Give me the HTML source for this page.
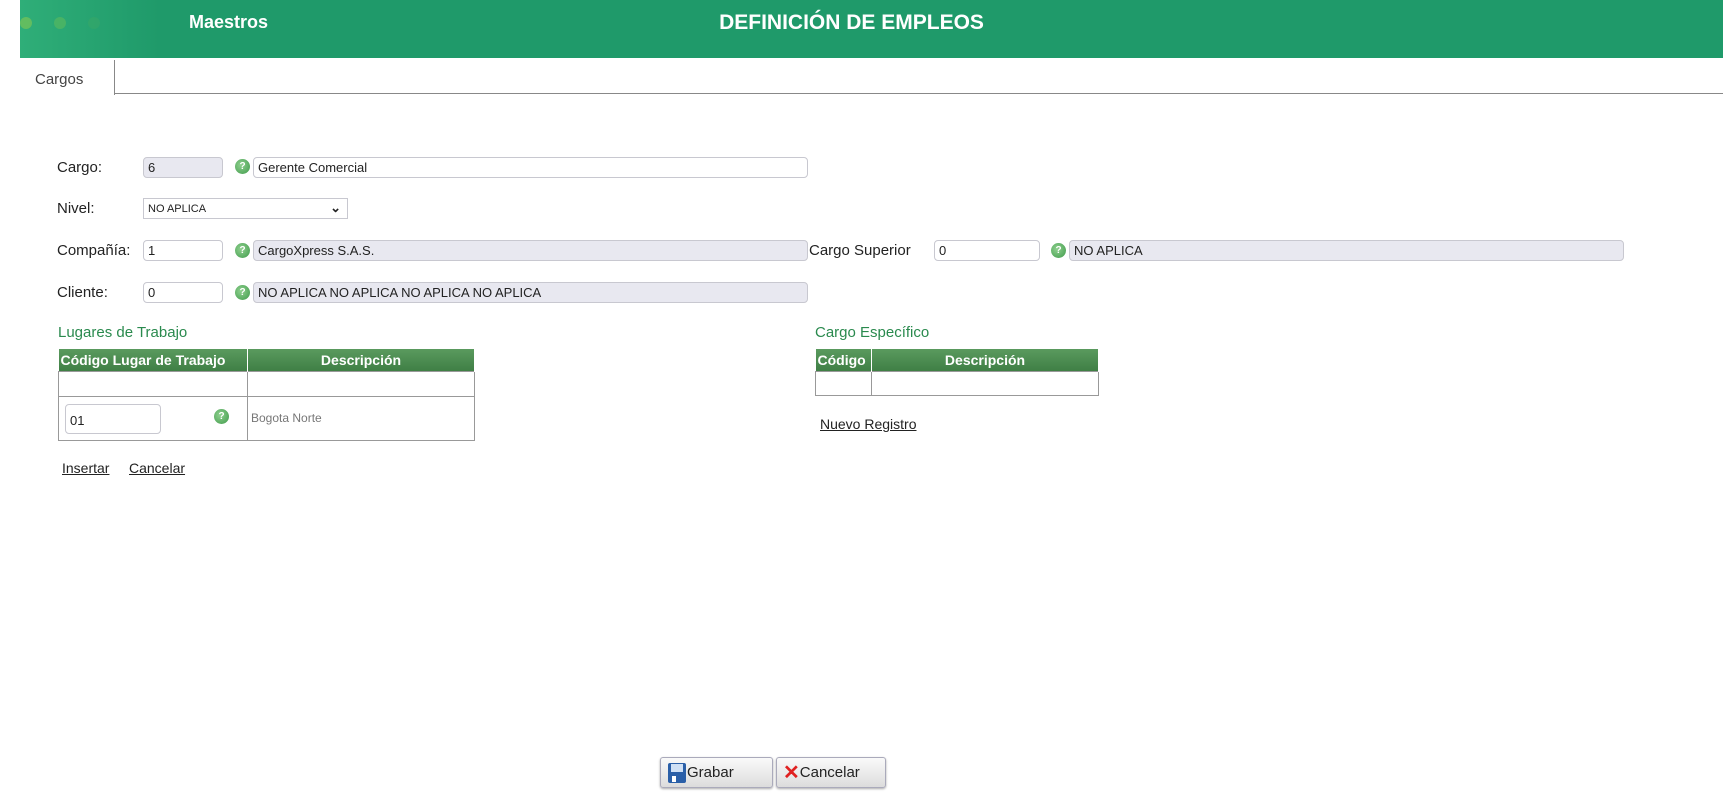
<!DOCTYPE html>
<html><head><meta charset="utf-8"><style>
*{box-sizing:border-box;margin:0;padding:0}
body{width:1723px;height:799px;background:#fff;font-family:"Liberation Sans",sans-serif;position:relative;overflow:hidden;color:#222}
.abs{position:absolute}
.hdr{left:20px;top:0;width:1703px;height:58px;background:linear-gradient(90deg,#2fae78 0,#1f9a6a 140px,#1f9a6a 100%)}
.dot{width:12px;height:12px;border-radius:50%;top:17px}
.lbl{font-size:15px;color:#222}
.inp{height:21px;border:1px solid #c8c8d0;border-radius:4px;background:#fff;font-size:13px;padding:2px 4px;line-height:15px}
.ro{background:#e8e8f0}
.ic{width:15px;height:15px;border-radius:50%;background:radial-gradient(circle at 40% 40%,#8fd08f,#3f9a4a);color:#fff;font-size:10px;font-weight:bold;text-align:center;line-height:15px}
.grn{color:#2a8a4e;font-size:15px}
table{border-collapse:collapse;position:absolute;font-size:14px}
th{background:linear-gradient(#5a9a5e,#3f7f45);color:#fff;font-weight:bold;height:22px;border-right:1px solid #fff;text-align:center;padding:0 2px}
td{border:1px solid #999}
a{color:#222;text-decoration:underline;font-size:14px;position:absolute}
.btn{height:31px;border:1px solid #aab;border-radius:3px;background:linear-gradient(#fafafa,#dcdcdc);font-size:15px;display:flex;align-items:center;padding-left:6px;box-shadow:0 1px 2px #aaa}
</style></head><body>
<div class="abs hdr"></div>
<div class="abs dot" style="left:20px;background:#6fc05a;opacity:.8"></div>
<div class="abs dot" style="left:54px;background:#55b860;opacity:.7"></div>
<div class="abs dot" style="left:88px;background:#3aa866;opacity:.5"></div>
<div class="abs" style="left:189px;top:12px;color:#fff;font-weight:bold;font-size:18px">Maestros</div>
<div class="abs" style="left:0;width:1703px;top:11px;text-align:center;color:#fff;font-weight:bold;font-size:21px">DEFINICIÓN DE EMPLEOS</div>
<div class="abs" style="left:114px;top:93px;width:1609px;height:1px;background:#888"></div>
<div class="abs" style="left:20px;top:60px;width:95px;height:35px;border-right:1px solid #888;background:#fff;font-size:15px;color:#444;padding:11px 0 0 15px">Cargos</div>

<div class="abs lbl" style="left:57px;top:159px">Cargo:</div>
<div class="abs inp ro" style="left:143px;top:157px;width:80px">6</div>
<div class="abs ic" style="left:235px;top:159px">?</div>
<div class="abs inp" style="left:253px;top:157px;width:555px">Gerente Comercial</div>

<div class="abs lbl" style="left:57px;top:200px">Nivel:</div>
<div class="abs inp" style="left:143px;top:198px;width:205px;border-radius:0;font-size:11px;padding-top:3px">NO APLICA<span style="position:absolute;right:6px;top:1px;font-size:13px;font-weight:bold">&#8964;</span></div>

<div class="abs lbl" style="left:57px;top:242px">Compañía:</div>
<div class="abs inp" style="left:143px;top:240px;width:80px">1</div>
<div class="abs ic" style="left:235px;top:243px">?</div>
<div class="abs inp ro" style="left:253px;top:240px;width:555px">CargoXpress S.A.S.</div>
<div class="abs lbl" style="left:809px;top:242px">Cargo Superior</div>
<div class="abs inp" style="left:934px;top:240px;width:106px">0</div>
<div class="abs ic" style="left:1051px;top:243px">?</div>
<div class="abs inp ro" style="left:1069px;top:240px;width:555px">NO APLICA</div>

<div class="abs lbl" style="left:57px;top:284px">Cliente:</div>
<div class="abs inp" style="left:143px;top:282px;width:80px">0</div>
<div class="abs ic" style="left:235px;top:285px">?</div>
<div class="abs inp ro" style="left:253px;top:282px;width:555px">NO APLICA NO APLICA NO APLICA NO APLICA</div>

<div class="abs grn" style="left:58px;top:324px">Lugares de Trabajo</div>
<table style="left:58px;top:349px;width:417px">
<tr><th style="width:189px;text-align:left">Código Lugar de Trabajo</th><th>Descripción</th></tr>
<tr style="height:25px"><td></td><td></td></tr>
<tr style="height:44px"><td style="position:relative"><div class="abs inp" style="left:6px;top:7px;width:96px;height:30px;padding-top:8px">01</div><div class="abs ic" style="left:155px;top:12px">?</div></td><td style="color:#777;font-size:12px;padding-left:3px">Bogota Norte</td></tr>
</table>
<a style="left:62px;top:460px">Insertar</a>
<a style="left:129px;top:460px">Cancelar</a>

<div class="abs grn" style="left:815px;top:324px">Cargo Específico</div>
<table style="left:815px;top:349px;width:284px">
<tr><th style="width:56px;text-align:left">Código</th><th>Descripción</th></tr>
<tr style="height:24px"><td></td><td></td></tr>
</table>
<a style="left:820px;top:416px">Nuevo Registro</a>

<div class="abs btn" style="left:660px;top:757px;width:113px"><svg width="20" height="22" viewBox="0 0 20 22"><rect x="1" y="1" width="18" height="20" rx="2" fill="#2a5fa8"/><rect x="4" y="2" width="12" height="8" fill="#cfe0f5"/><rect x="5" y="14" width="4" height="6" fill="#fff"/></svg>Grabar</div>
<div class="abs btn" style="left:776px;top:757px;width:110px"><span style="color:#e02020;font-weight:bold;font-size:20px">✕</span>Cancelar</div>
</body></html>
